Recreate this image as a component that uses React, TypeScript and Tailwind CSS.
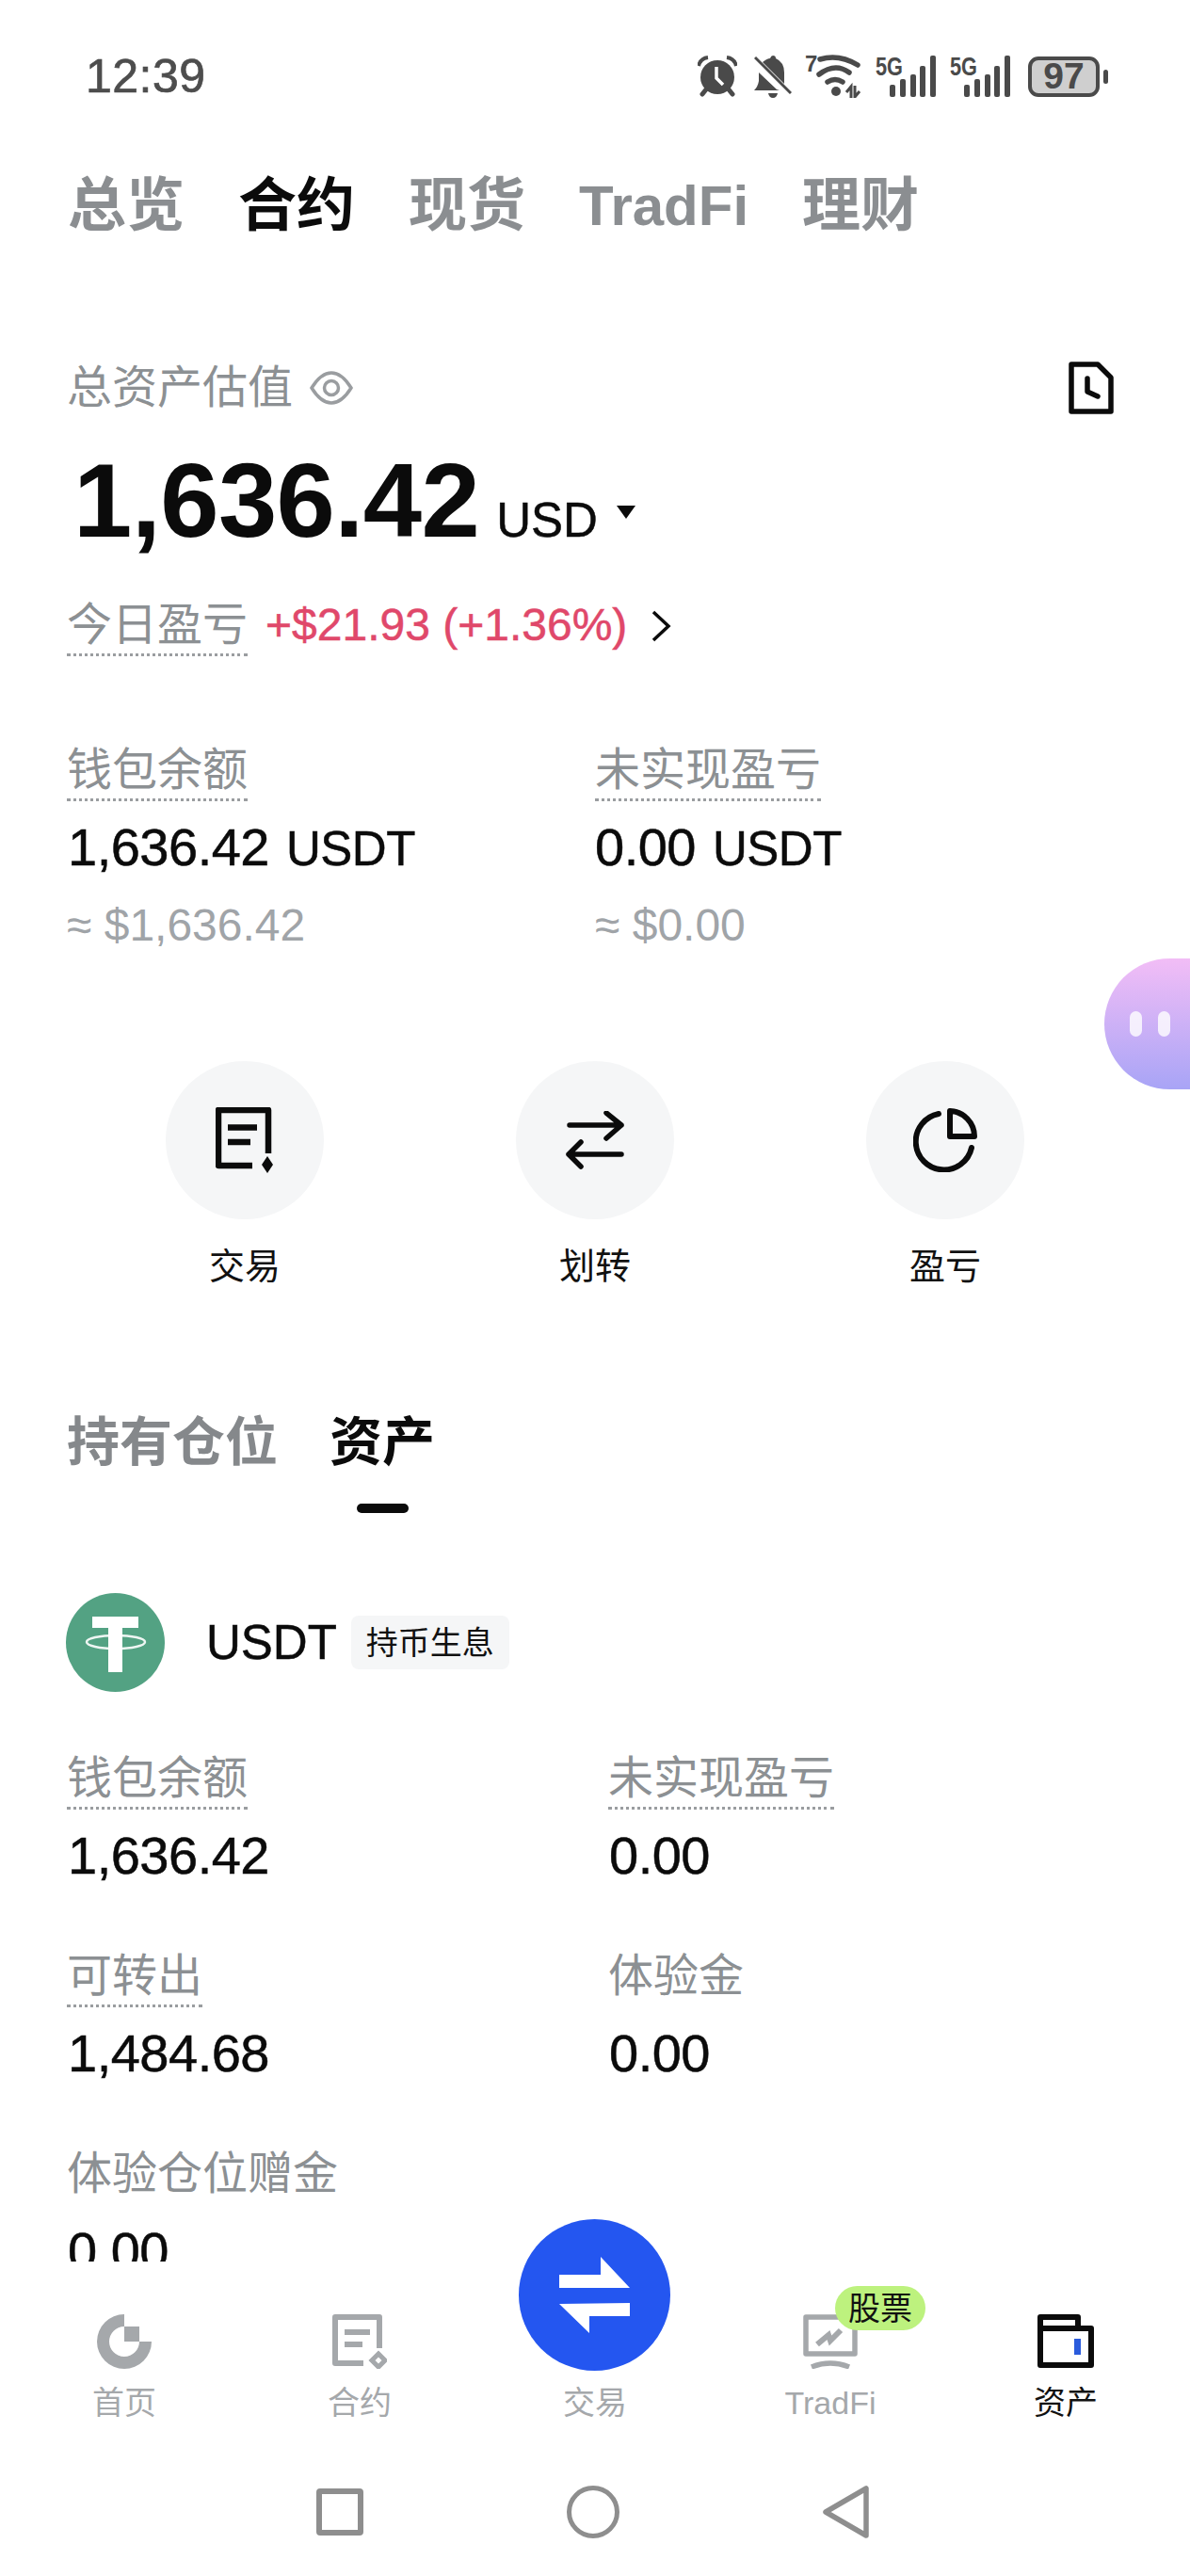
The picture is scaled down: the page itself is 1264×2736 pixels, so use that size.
import React from "react";

const font = { fontFamily: '"Liberation Sans","Noto Sans CJK SC",sans-serif' };

function Dotted({ children }: { children: React.ReactNode }) {
  return (
    <div className="w-fit text-[48px] leading-[48px] text-[#8c9093] pb-[6px] border-b-[3px] border-dotted border-[#9a9da0]">
      {children}
    </div>
  );
}

function Plain({ children }: { children: React.ReactNode }) {
  return <div className="w-fit text-[48px] leading-[48px] text-[#8c9093] pb-[9px]">{children}</div>;
}

function Cell({ label, value, dotted = true }: { label: string; value: string; dotted?: boolean }) {
  return (
    <div>
      {dotted ? <Dotted>{label}</Dotted> : <Plain>{label}</Plain>}
      <div className="ml-[1px] mt-[22px] text-[56px] leading-[54px] text-[#0b0b0b] tracking-[-0.5px] [-webkit-text-stroke:0.5px_#0b0b0b]">{value}</div>
    </div>
  );
}

function Alarm() {
  return (
    <svg width="42" height="44" viewBox="0 0 42 44">
      <circle cx="21" cy="23" r="18" fill="#4a4a4a" />
      <path d="M1 11 Q3 3 11 2" stroke="#4a4a4a" strokeWidth="4" fill="none" />
      <path d="M41 11 Q39 3 31 2" stroke="#4a4a4a" strokeWidth="4" fill="none" />
      <path d="M5 41 L9 36 M37 41 L33 36" stroke="#4a4a4a" strokeWidth="5" strokeLinecap="round" />
      <path d="M20 12 V24 L27 31" stroke="#fff" strokeWidth="3.5" fill="none" />
    </svg>
  );
}

function Bell() {
  return (
    <svg width="40" height="45" viewBox="0 0 40 45">
      <path d="M0 37 Q4 33 5 27 V18 L24 36 L27 37 Z" fill="#4a4a4a" />
      <path d="M9 7 Q14 3 17 3 Q18 0 20 0 Q23 0 23 3 Q32 7 32 18 V30 Z" fill="#4a4a4a" />
      <path d="M15 40 H25 Q24 45 20 45 Q16 45 15 40 Z" fill="#4a4a4a" />
      <path d="M1 2 L39 40" stroke="#4a4a4a" strokeWidth="3" />
    </svg>
  );
}

function Wifi() {
  return (
    <svg className="-mt-[5px]" width="60" height="51" viewBox="0 -5 60 51">
      <text x="0" y="18" fontSize="24" fontWeight="700" fill="#4a4a4a" fontFamily="Liberation Sans">7</text>
      <g fill="none" stroke="#4a4a4a" strokeWidth="5.5" strokeLinecap="round">
        <path d="M16 5 Q36 -1 56 11" />
        <path d="M15 21 Q32 8 47 19" />
        <path d="M24 29 Q32 24 40 29" />
      </g>
      <circle cx="33" cy="39" r="5" fill="#4a4a4a" />
      <path d="M49 46 V34 L44 40 M53 33 V45 L58 39" stroke="#4a4a4a" strokeWidth="3" fill="none" />
    </svg>
  );
}

function Signal() {
  return (
    <svg className="-mt-[4px]" width="64" height="48" viewBox="0 -4 64 48">
      <text x="0" y="21" fontSize="27" fontWeight="700" fill="#4a4a4a" fontFamily="Liberation Sans" textLength="29" lengthAdjust="spacingAndGlyphs">5G</text>
      <rect x="15" y="31" width="6" height="13" rx="2" fill="#4a4a4a" />
      <rect x="26" y="25" width="6" height="19" rx="2" fill="#4a4a4a" />
      <rect x="37" y="20" width="6" height="24" rx="2" fill="#4a4a4a" />
      <rect x="47" y="11" width="6" height="33" rx="2" fill="#4a4a4a" />
      <rect x="58" y="0" width="6" height="44" rx="2" fill="#4a4a4a" />
    </svg>
  );
}

function Battery() {
  return (
    <div className="flex items-center gap-[4px]">
      <div className="w-[76px] h-[43px] rounded-[11px] border-[4px] border-[#4a4a4a] bg-[#cfcfcf] flex items-center justify-center text-[39px] leading-[36px] font-bold text-[#4a4a4a]" style={font}>
        97
      </div>
      <div className="w-[5px] h-[15px] rounded-full bg-[#4a4a4a]" />
    </div>
  );
}

function DocIcon() {
  return (
    <svg width="64" height="70" viewBox="0 0 64 70" fill="none" stroke="#0b0b0b">
      <path d="M56 49 V3 H3 V62 H39" strokeWidth="6.5" strokeLinejoin="round" />
      <path d="M13 21.5 H44 M13 37 H37" strokeWidth="6.5" />
      <path d="M55 52 L61 61 L55 70 L49 61 Z" fill="#0b0b0b" stroke="none" />
    </svg>
  );
}

function TransferIcon() {
  return (
    <svg width="62" height="62" viewBox="0 0 62 62" fill="none" stroke="#0b0b0b" strokeWidth="5.5" strokeLinecap="round" strokeLinejoin="round">
      <path d="M4 15 H59 M43 2 L59 15 L43 29" />
      <path d="M59 46 H3 M16 33 L3 46 L16 59" />
    </svg>
  );
}

function PieIcon() {
  return (
    <svg width="68" height="68" viewBox="0 0 68 68" fill="none" stroke="#0b0b0b" strokeWidth="6">
      <path d="M27 6 A30 30 0 1 0 62 42" strokeLinecap="round" />
      <path d="M39 3 V30 H65 A27 27 0 0 0 39 3 Z" strokeLinejoin="round" />
    </svg>
  );
}

function Tether() {
  return (
    <svg width="105" height="105" viewBox="0 0 105 105">
      <circle cx="52.5" cy="52.5" r="52.5" fill="#53a283" />
      <path d="M28 25 H77 V37 H60 V84 H45 V37 H28 Z" fill="#fff" />
      <ellipse cx="53" cy="52" rx="31" ry="7" fill="none" stroke="#fff" strokeWidth="2.5" opacity="0.9" />
    </svg>
  );
}

function HomeIcon() {
  return (
    <svg width="58" height="58" viewBox="0 0 58 58" fill="#a5a8ab">
      <path d="M29 0 A29 29 0 1 0 58 29 H45 A16 16 0 1 1 29 13 Z" />
      <rect x="29" y="13" width="16" height="16" />
    </svg>
  );
}

function ContractIcon() {
  return (
    <svg width="58" height="58" viewBox="0 0 58 58" fill="none" stroke="#a5a8ab">
      <path d="M50 36 V3 H3 V52 H33" strokeWidth="6" strokeLinejoin="round" />
      <path d="M13 19 H40 M13 32 H32" strokeWidth="6" />
      <path d="M49 42 L56 49 L49 56 L42 49 Z" strokeWidth="5" />
    </svg>
  );
}

function TradFiIcon() {
  return (
    <svg width="58" height="58" viewBox="0 0 58 58" fill="none" stroke="#a5a8ab">
      <path d="M3 3 H55 V42 H3 Z" strokeWidth="5.5" strokeLinejoin="round" />
      <path d="M15 32 L27 22 L29 28 L40 17" strokeWidth="6" />
      <path d="M9 56 Q29 48 49 56" strokeWidth="5.5" />
    </svg>
  );
}

function WalletIcon() {
  return (
    <svg width="60" height="58" viewBox="0 0 60 58" fill="none">
      <path d="M3 3 H43 V15 H57 V54 H3 Z" stroke="#0b0b0b" strokeWidth="6" strokeLinejoin="round" />
      <path d="M3 15 H43" stroke="#0b0b0b" strokeWidth="6" />
      <rect x="39" y="26" width="7" height="17" fill="#2a5bdc" />
    </svg>
  );
}

function NavItem({ icon, label, active = false, badge }: { icon?: React.ReactNode; label: string; active?: boolean; badge?: string }) {
  return (
    <div className="flex flex-col items-center">
      <div className="relative h-[58px] w-[60px] flex items-center justify-center">
        {icon}
        {badge && (
          <div className="absolute left-[35px] top-[-30px] w-[96px] h-[47px] rounded-full bg-[#bdf27e] flex items-center justify-center text-[34px] leading-[34px] text-[#111]">
            {badge}
          </div>
        )}
      </div>
      <div className={`mt-[19px] text-[34px] leading-[34px] ${active ? "text-[#111]" : "text-[#a5a8ab]"}`}>{label}</div>
    </div>
  );
}

function Action({ icon, label }: { icon: React.ReactNode; label: string }) {
  return (
    <div className="flex flex-col items-center">
      <div className="w-[168px] h-[168px] rounded-full bg-[#f5f6f7] flex items-center justify-center">{icon}</div>
      <div className="mt-[31px] text-[38px] leading-[38px] text-[#111]">{label}</div>
    </div>
  );
}

export default function App() {
  return (
    <div className="relative w-[1264px] h-[2736px] overflow-hidden bg-white" style={font}>
      <div className="h-[2402px] overflow-hidden">
        {/* status bar */}
        <div className="mt-0 pt-[59px] pl-[91px] pr-[87px] flex items-center justify-between h-[103px]">
          <div className="text-[50px] leading-[44px] text-[#4d4d4d] tracking-[0.5px] [-webkit-text-stroke:0.7px_#4d4d4d]">12:39</div>
          <div className="flex items-center">
            <Alarm />
            <div className="ml-[18px]"><Bell /></div>
            <div className="ml-[14px]"><Wifi /></div>
            <div className="ml-[15px]"><Signal /></div>
            <div className="ml-[15px]"><Signal /></div>
            <div className="ml-[19px]"><Battery /></div>
          </div>
        </div>

        {/* top tabs */}
        <div className="mt-[86px] pl-[72px] flex gap-[57px] text-[62px] leading-[60px] font-bold text-[#8b8e91]">
          <span>总览</span>
          <span className="text-[#0b0b0b]">合约</span>
          <span>现货</span>
          <span className="text-[60px]">TradFi</span>
          <span>理财</span>
        </div>

        <div className="pl-[71px]">
          {/* total */}
          <div className="mt-[135px] h-[56px] pr-[81px] flex items-center justify-between">
            <div className="flex items-center gap-[18px]">
              <span className="text-[48px] leading-[48px] text-[#8c9093]">总资产估值</span>
              <svg width="46" height="38" viewBox="0 0 46 38" fill="none" stroke="#9a9da0" strokeWidth="3.5">
                <path d="M2 19 Q12 3 23 3 Q34 3 44 19 Q34 35 23 35 Q12 35 2 19 Z" />
                <circle cx="23" cy="19" r="7.5" />
              </svg>
            </div>
            <svg width="48" height="56" viewBox="0 0 48 56" fill="none" stroke="#0b0b0b" strokeWidth="5.5" strokeLinejoin="round" strokeLinecap="round">
              <path d="M3 3 H31 L45 17 V53 H3 Z" />
              <path d="M20 18 V32 L31 37" />
            </svg>
          </div>

          <div className="mt-[36px] flex items-baseline">
            <span className="ml-[7px] text-[112px] leading-[112px] font-bold text-[#0b0b0b] tracking-[-0.6px]">1,636.42</span>
            <span className="ml-[18px] text-[51px] leading-[51px] text-[#0b0b0b] [-webkit-text-stroke:0.5px_#0b0b0b]">USD</span>
            <svg className="ml-[20px] self-center mt-[24px]" width="20" height="14" viewBox="0 0 20 14">
              <path d="M0 0 H20 L10 14 Z" fill="#0b0b0b" />
            </svg>
          </div>

          <div className="mt-[52px] flex items-start">
            <Dotted>今日盈亏</Dotted>
            <span className="ml-[19px] text-[48px] leading-[48px] text-[#e0486a] [-webkit-text-stroke:0.5px_#e0486a]">+$21.93 (+1.36%)</span>
            <svg className="ml-[25px] mt-[8px]" width="22" height="34" viewBox="0 0 22 34" fill="none" stroke="#0b0b0b" strokeWidth="3.5">
              <path d="M3 2 L19 17 L3 32" />
            </svg>
          </div>

          {/* balances */}
          <div className="mt-[97px] grid grid-cols-[561px_1fr]">
            <div>
              <Dotted>钱包余额</Dotted>
              <div className="ml-[1px] mt-[22px] flex items-baseline gap-[18px] text-[56px] leading-[54px] text-[#0b0b0b] tracking-[-0.5px] [-webkit-text-stroke:0.5px_#0b0b0b]">
                <span>1,636.42</span>
                <span className="text-[51px]">USDT</span>
              </div>
              <div className="mt-[30px] text-[48px] leading-[48px] text-[#a0a4a8]">≈ $1,636.42</div>
            </div>
            <div>
              <Dotted>未实现盈亏</Dotted>
              <div className="mt-[22px] flex items-baseline gap-[18px] text-[56px] leading-[54px] text-[#0b0b0b] tracking-[-0.5px] [-webkit-text-stroke:0.5px_#0b0b0b]">
                <span>0.00</span>
                <span className="text-[51px]">USDT</span>
              </div>
              <div className="mt-[30px] text-[48px] leading-[48px] text-[#a0a4a8]">≈ $0.00</div>
            </div>
          </div>
        </div>

        {/* actions */}
        <div className="mt-[120px] px-[74px] grid grid-cols-3">
          <Action icon={<div className="ml-[2px]"><DocIcon /></div>} label="交易" />
          <Action icon={<TransferIcon />} label="划转" />
          <Action icon={<PieIcon />} label="盈亏" />
        </div>

        <div className="pl-[71px]">
          {/* section tabs */}
          <div className="mt-[140px] flex items-start gap-[55px] text-[56px] leading-[56px] font-bold">
            <span className="text-[#85888b]">持有仓位</span>
            <div className="flex flex-col items-center">
              <span className="text-[#0b0b0b]">资产</span>
              <div className="mt-[37px] w-[55px] h-[10px] rounded-full bg-[#0b0b0b]" />
            </div>
          </div>

          {/* coin */}
          <div className="mt-[85px] flex items-center">
            <div className="-ml-[1px]"><Tether /></div>
            <span className="ml-[44px] text-[51px] leading-[51px] text-[#0b0b0b] [-webkit-text-stroke:0.5px_#0b0b0b]">USDT</span>
            <span className="ml-[15px] h-[57px] px-[16px] rounded-[8px] bg-[#f5f6f7] flex items-center text-[34px] leading-[34px] text-[#111]">持币生息</span>
          </div>

          <div className="mt-[68px] grid grid-cols-[575px_1fr] gap-y-[77px]">
            <Cell label="钱包余额" value="1,636.42" />
            <Cell label="未实现盈亏" value="0.00" />
            <Cell label="可转出" value="1,484.68" />
            <Cell label="体验金" value="0.00" dotted={false} />
            <Cell label="体验仓位赠金" value="0.00" dotted={false} />
          </div>
        </div>
      </div>

      {/* floating assistant */}
      <div className="absolute right-0 top-[1018px] w-[91px] h-[139px] rounded-l-[70px] bg-linear-to-b from-[#f2bdf6] to-[#a8a4f6] flex items-center gap-[17px] pl-[27px] pb-[1px]">
        <div className="w-[13px] h-[27px] rounded-full bg-white/80" />
        <div className="w-[13px] h-[27px] rounded-full bg-white/80" />
      </div>

      {/* bottom nav */}
      <div className="relative h-[334px] bg-white">
        <div className="pt-[56px] px-[7px] grid grid-cols-5">
          <NavItem icon={<HomeIcon />} label="首页" />
          <NavItem icon={<ContractIcon />} label="合约" />
          <NavItem label="交易" />
          <NavItem icon={<TradFiIcon />} label="TradFi" badge="股票" />
          <NavItem icon={<WalletIcon />} label="资产" active />
        </div>
        <div className="absolute left-[551px] top-[-45px] w-[161px] h-[161px] rounded-full bg-[#2456f0]">
          <svg width="161" height="161" viewBox="0 0 161 161" fill="#fff">
            <path d="M43 59 H87 V40 L118 73 H43 Z" />
            <path d="M118 89 V103 H75 V121 L43 90 Z" />
          </svg>
        </div>

        <div className="mt-[71px] pr-[6px] flex justify-center items-center gap-[216px]">
          <div className="w-[50px] h-[50px] rounded-[4px] border-[6px] border-[#8e8e8e]" />
          <div className="w-[56px] h-[56px] rounded-full border-[5px] border-[#8e8e8e]" />
          <svg width="49" height="56" viewBox="0 0 49 56" fill="none" stroke="#8e8e8e" strokeWidth="5.5" strokeLinejoin="round">
            <path d="M46 3 V53 L3 28 Z" />
          </svg>
        </div>
      </div>
    </div>
  );
}
